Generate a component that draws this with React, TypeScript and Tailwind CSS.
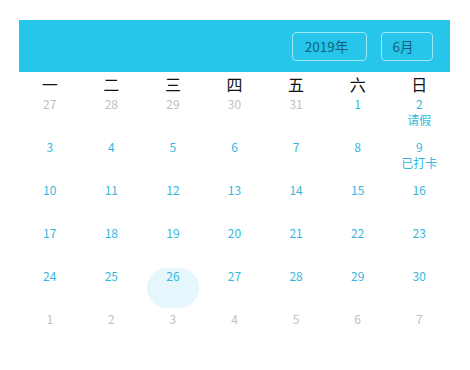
const font = { fontFamily: '"Noto Sans CJK SC", "Noto Sans", sans-serif' };

type Day = { n: number; muted?: boolean; note?: string; today?: boolean };

const weekdays = ["一", "二", "三", "四", "五", "六", "日"];

function buildDays(): Day[] {
  const days: Day[] = [];
  for (let n = 27; n <= 31; n++) days.push({ n, muted: true });
  for (let n = 1; n <= 30; n++) {
    const d: Day = { n };
    if (n === 2) d.note = "请假";
    if (n === 9) d.note = "已打卡";
    if (n === 26) d.today = true;
    days.push(d);
  }
  for (let n = 1; n <= 7; n++) days.push({ n, muted: true });
  return days;
}

export default function App() {
  const days = buildDays();
  return (
    <div className="w-[470px] h-[370px] bg-white pt-5 pl-[19px] pr-[20px]" style={font}>
      <div className="h-[52px] bg-[#25c6ea] flex items-center justify-end gap-[14px] pr-[17px]">
        <div className="w-[75px] h-[29px] border border-[#9fe6f7] rounded-[4px] flex items-center justify-center pr-[6px] text-[13.5px] text-[#16607e]">
          2019年
        </div>
        <div className="w-[52px] h-[29px] border border-[#9fe6f7] rounded-[4px] flex items-center justify-center pr-[8px] text-[13.5px] text-[#16607e]">
          6月
        </div>
      </div>
      <div className="grid grid-cols-7 h-[24px] items-center">
        {weekdays.map((w) => (
          <div key={w} className="text-center text-[16px] leading-[20px] text-[#111]">
            {w}
          </div>
        ))}
      </div>
      <div className="grid grid-cols-7">
        {days.map((d, i) => (
          <div key={i} className="relative h-[43px] flex flex-col items-center">
            {d.today && (
              <div className="absolute top-0 left-1/2 -translate-x-1/2 w-[52px] h-[40px] rounded-full bg-[#e5f6fd]" />
            )}
            <span
              className={`relative text-[12px] leading-[16px] ${d.muted ? "text-[#c0c0c0]" : "text-[#33b8dd]"}`}
            >
              {d.n}
            </span>
            {d.note && (
              <span className="relative text-[12px] leading-[16px] text-[#33b8dd]">{d.note}</span>
            )}
          </div>
        ))}
      </div>
    </div>
  );
}
